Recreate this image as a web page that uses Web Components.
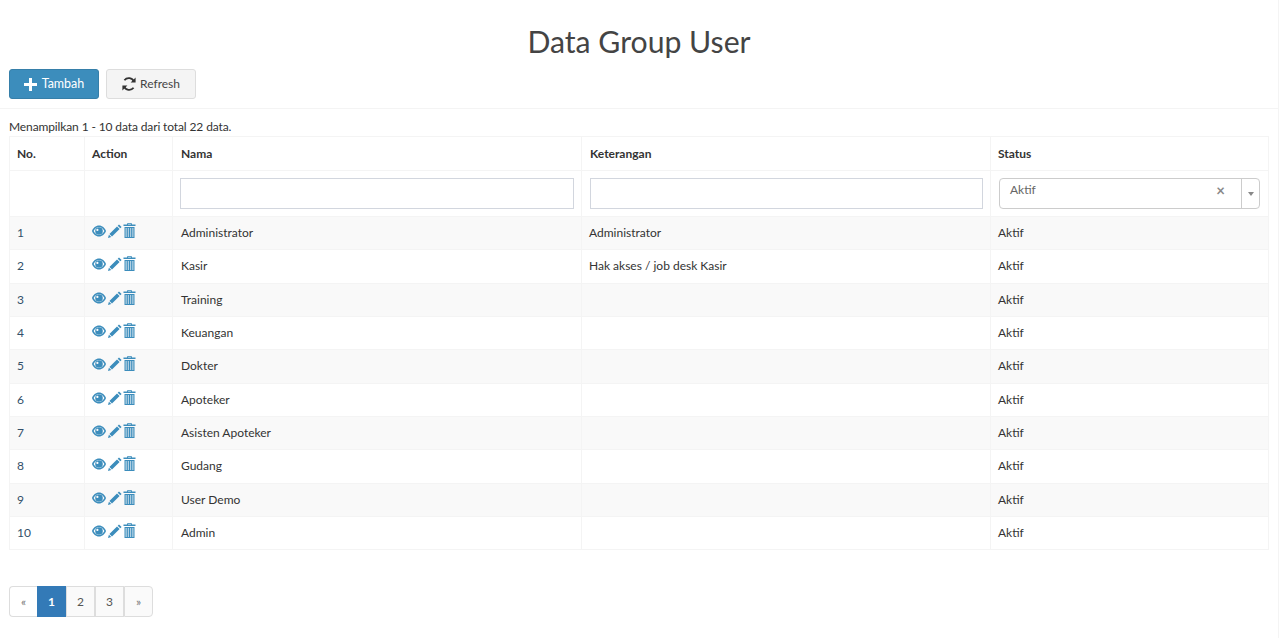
<!DOCTYPE html>
<html>
<head>
<meta charset="utf-8">
<title>Data Group User</title>
<style>
  html, body { margin: 0; background: #fff; }
  body { font-family: Lato, "Noto Sans", sans-serif; font-size: 12px; color: #333; }
</style>
</head>
<body>
<group-page>
  <page-title>Data Group User</page-title>
  <tool-bar></tool-bar>
  <table-info>Menampilkan 1 - 10 data dari total 22 data.</table-info>
  <group-table>
    <group-row no="1" nama="Administrator" ket="Administrator"></group-row>
    <group-row no="2" nama="Kasir" ket="Hak akses / job desk Kasir"></group-row>
    <group-row no="3" nama="Training"></group-row>
    <group-row no="4" nama="Keuangan"></group-row>
    <group-row no="5" nama="Dokter"></group-row>
    <group-row no="6" nama="Apoteker"></group-row>
    <group-row no="7" nama="Asisten Apoteker"></group-row>
    <group-row no="8" nama="Gudang"></group-row>
    <group-row no="9" nama="User Demo"></group-row>
    <group-row no="10" nama="Admin"></group-row>
  </group-table>
  <page-nav></page-nav>
</group-page>

<script>
class GroupPage extends HTMLElement {
  constructor() {
    super();
    this.attachShadow({mode: 'open'});
    this.shadowRoot.innerHTML = `
    <style>
      :host { display: block; width: 1279px; height: 638px; box-sizing: border-box; border-right: 1px solid #f4f4f4; }
    </style>
    <slot></slot>
    `;
  }
}

class PageTitle extends HTMLElement {
  constructor() {
    super();
    this.attachShadow({mode: 'open'});
    this.shadowRoot.innerHTML = `
    <style>
      :host { display: block; height: 69px; box-sizing: border-box; padding-top: 21px; text-align: center; font-size: 30.2px; line-height: 40px; color: #444; }
    </style>
    <slot></slot>
    `;
  }
}

class ToolBar extends HTMLElement {
  constructor() {
    super();
    this.attachShadow({mode: 'open'});
    this.shadowRoot.innerHTML = `
    <style>
      :host { display: flex; gap: 7px; height: 40px; box-sizing: border-box; padding: 0 9px; border-bottom: 1px solid #f4f4f4; }
      button { font: inherit; height: 30px; box-sizing: border-box; border-radius: 3px; display: flex; align-items: center; justify-content: center; gap: 5px; padding: 0; }
      button span { margin-top: -1px; }
      .add { width: 90px; background: #3c8dbc; border: 1px solid #367fa9; color: #fff; font-size: 12.5px; }
      .refresh { width: 90px; background: #f4f4f4; border: 1px solid #ddd; color: #444; gap: 4px; font-size: 12px; }
      svg { display: block; }
    </style>
    <button class="add">
      <svg width="13" height="13" viewBox="0 0 13 13"><path fill="#fff" d="M5 0h3v5h5v3H8v5H5V8H0V5h5z"/></svg>
      <span>Tambah</span>
    </button>
    <button class="refresh">
      <svg width="14" height="14" viewBox="0 0 14 14" fill="none" stroke="#333" stroke-width="1.8"><path d="M12 4.600A5.600 5.600 0 0 0 2.400 3.200"/><path d="M2 9.400a5.600 5.600 0 0 0 9.600 1.400"/><path fill="#333" stroke="none" d="M13.600 .6v5h-5zM.4 13.400v-5h5z"/></svg>
      <span>Refresh</span>
    </button>
    `;
  }
}

class TableInfo extends HTMLElement {
  constructor() {
    super();
    this.attachShadow({mode: 'open'});
    this.shadowRoot.innerHTML = `
    <style>
      :host { display: block; height: 27px; box-sizing: border-box; padding: 9px 9px 0; line-height: 17px; letter-spacing: -.12px; }
    </style>
    <slot></slot>
    `;
  }
}

class GroupTable extends HTMLElement {
  constructor() {
    super();
    this.attachShadow({mode: 'open'});
    this.shadowRoot.innerHTML = `
    <style>
      :host { display: block; width: 1260px; margin: 0 9px; box-sizing: border-box; border: 1px solid #f4f4f4; border-bottom: 0; --cols: 74px 88px 409px 409px 1fr; }
      .row { display: grid; grid-template-columns: var(--cols); border-bottom: 1px solid #f4f4f4; box-sizing: border-box; }
      .row > div { border-left: 1px solid #f4f4f4; box-sizing: border-box; padding: 0 7px; display: flex; align-items: center; min-width: 0; }
      .row > div:first-child { border-left: 0; }
      .row > div:nth-child(4) { padding-left: 8px; }
      .head > div:nth-child(3) { padding-left: 8px; }
      .filter > div:nth-child(5) { padding: 0 8px; }
      .head { height: 34px; font-weight: 700; color: #333; }
      .filter { height: 46px; }
      input { width: 100%; height: 31px; box-sizing: border-box; border: 1px solid #d2d6de; background: #fff; margin: 0; padding: 0 6px; display: block; }
    </style>
    <div class="row head"><div>No.</div><div>Action</div><div>Nama</div><div>Keterangan</div><div>Status</div></div>
    <div class="row filter"><div></div><div></div><div><input type="text"></div><div><input type="text"></div><div><status-select>Aktif</status-select></div></div>
    <slot></slot>
    `;
  }
}

class StatusSelect extends HTMLElement {
  constructor() {
    super();
    this.attachShadow({mode: 'open'});
    this.shadowRoot.innerHTML = `
    <style>
      :host { display: flex; width: 100%; height: 31px; box-sizing: border-box; border: 1px solid #ccc; border-radius: 4px; color: #666; background: #fff; }
      .value { flex: 1; padding: 2px 10px; line-height: 17px; display: flex; justify-content: space-between; }
      .x { font-weight: 700; color: #888; font-size: 15px; line-height: 21px; margin: -1px 6px 0 0; }
      .arrow { width: 17px; border-left: 1px solid #ccc; display: flex; align-items: center; justify-content: center; }
      .arrow i { width: 0; height: 0; border: 3px solid transparent; border-top: 4px solid #888; border-bottom: 0; }
    </style>
    <div class="value"><span><slot></slot></span><span class="x">×</span></div>
    <div class="arrow"><i></i></div>
    `;
  }
}

class RowActions extends HTMLElement {
  constructor() {
    super();
    this.attachShadow({mode: 'open'});
    this.shadowRoot.innerHTML = `
    <style>
      :host { display: flex; gap: 1px; margin-top: -3px; color: #3c8dbc; }
      svg { display: block; fill: currentColor; }
    </style>
    <svg width="14" height="14" viewBox="0 0 14 14"><path fill-rule="evenodd" d="M7 1.500C3.700 1.500 1.200 3.900 0 7c1.200 3.100 3.700 5.500 7 5.500s5.800-2.400 7-5.500c-1.200-3.100-3.700-5.500-7-5.500zM7 3c2.500 0 4.300 1.800 5.400 4-1.100 2.200-2.900 4-5.400 4S2.700 9.200 1.600 7C2.700 4.800 4.500 3 7 3z"/><path fill-rule="evenodd" d="M7 3.200a3.800 3.800 0 1 0 0 7.600 3.800 3.800 0 0 0 0-7.600zM5.400 4.800a1.100 1.100 0 1 1 0 2.200 1.100 1.100 0 0 1 0-2.200z"/></svg>
    <svg width="15" height="14" viewBox="0 0 15 14"><path d="M12 .4 14.600 3l-1.300 1.300-2.600-2.600zM10 2.400 12.600 5l-7.600 7.600-2.600-2.600zM1.900 10.700 4.300 13.100 1 14z"/></svg>
    <svg width="13" height="15" viewBox="0 0 13 15" style="margin-top:-1px"><path d="M4.500 0h4l.5 1.500h3.500v1.500H.5V1.500H4zM5.200 .8 5 1.500h3l-.2-.7z"/><path opacity=".4" d="M2 4.500h9V14H2z"/><path fill-rule="evenodd" d="M1.500 4h10v11h-10zM2.500 5v9h1.300V5zM4.800 5v9h1.200V5zM7 5v9h1.200V5zM9.200 5v9h1.300V5z"/></svg>
    `;
  }
}

class GroupRow extends HTMLElement {
  constructor() {
    super();
    this.attachShadow({mode: 'open'});
  }
  connectedCallback() {
    const no = this.getAttribute('no');
    const odd = Number(no) % 2 == 1;
    this.shadowRoot.innerHTML = `
    <style>
      :host { display: grid; grid-template-columns: var(--cols); height: 33.33px; box-sizing: border-box; border-bottom: 1px solid #f4f4f4; background: ${odd ? '#f9f9f9' : '#fff'}; }
      div { border-left: 1px solid #f4f4f4; box-sizing: border-box; padding: 0 7px 1px; display: flex; align-items: center; min-width: 0; }
      div:first-of-type { border-left: 0; color: #33506a; }
      div:nth-of-type(3) { padding-left: 8px; }
    </style>
    <div>${no}</div>
    <div><row-actions></row-actions></div>
    <div>${this.getAttribute('nama')}</div>
    <div>${this.getAttribute('ket') || ''}</div>
    <div>Aktif</div>
    `;
  }
}

class PageNav extends HTMLElement {
  constructor() {
    super();
    this.attachShadow({mode: 'open'});
    this.shadowRoot.innerHTML = `
    <style>
      :host { display: flex; width: max-content; margin: 36px 0 0 9px; height: 31px; font-size: 12px; }
      a { box-sizing: border-box; width: 29px; height: 31px; display: flex; align-items: center; justify-content: center; border: 1px solid #ddd; background: #fafafa; color: #555; }
      a:first-of-type { width: 28px; background: #fff; color: #777; border-right: 0; border-radius: 4px 0 0 4px; }
      a:last-of-type { color: #777; border-radius: 0 4px 4px 0; }
      a.on { background: #337ab7; border-color: #337ab7; color: #fff; font-weight: 700; }
    </style>
    <a>«</a><a class="on">1</a><a>2</a><a>3</a><a>»</a>
    `;
  }
}

customElements.define('group-page', GroupPage);
customElements.define('page-title', PageTitle);
customElements.define('tool-bar', ToolBar);
customElements.define('table-info', TableInfo);
customElements.define('group-table', GroupTable);
customElements.define('status-select', StatusSelect);
customElements.define('row-actions', RowActions);
customElements.define('group-row', GroupRow);
customElements.define('page-nav', PageNav);
</script>
</body>
</html>
